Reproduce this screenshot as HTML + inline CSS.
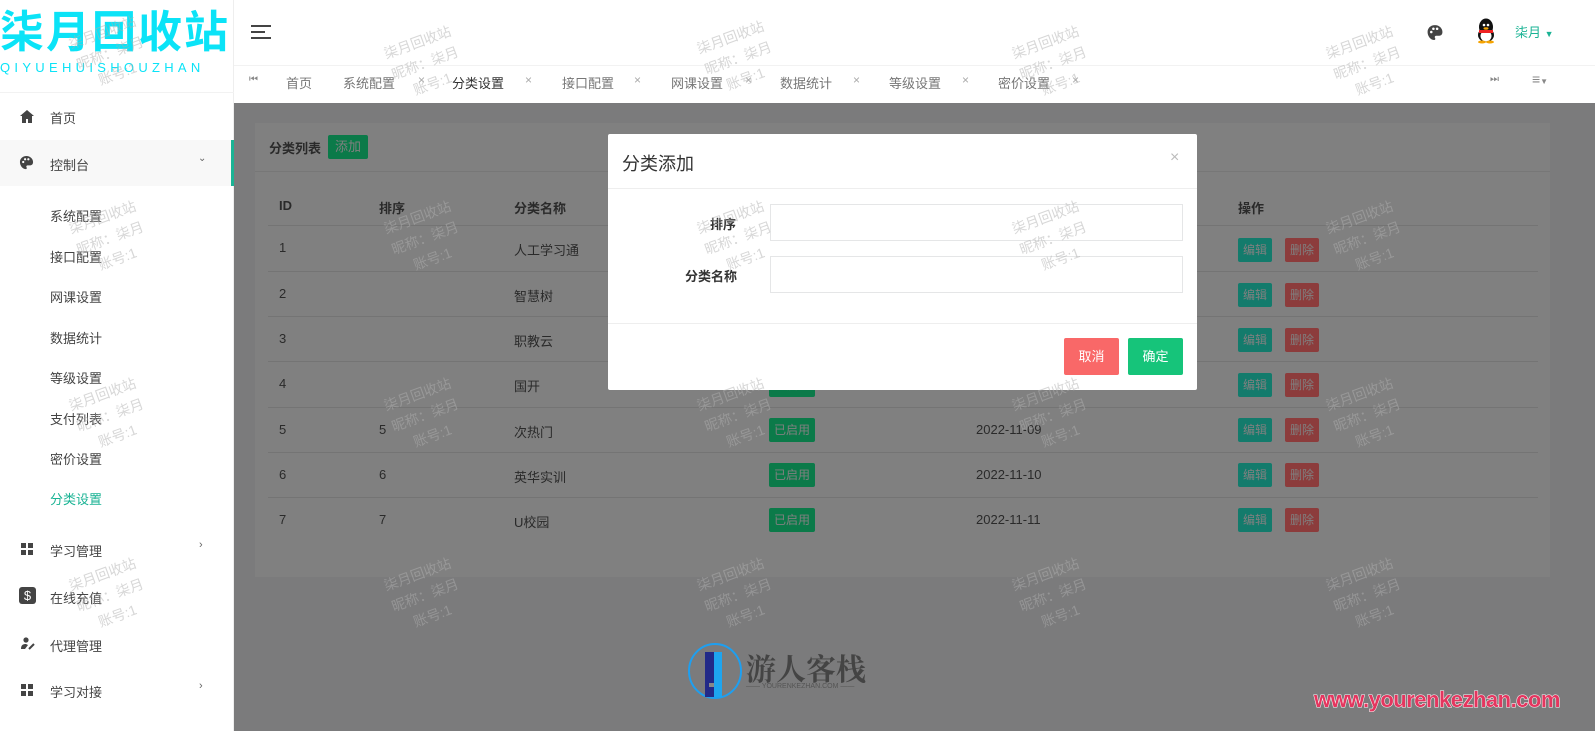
<!DOCTYPE html>
<html><head><meta charset="utf-8"><style>
*{margin:0;padding:0;box-sizing:border-box}
body{width:1595px;height:731px;overflow:hidden;position:relative;font-family:"Liberation Sans","Noto Sans CJK SC",sans-serif;font-size:13px;color:#333;background:#fff}
.a{position:absolute;white-space:nowrap}
.side{position:absolute;left:0;top:0;width:234px;height:731px;background:#fff;border-right:1px solid #eee}
.mi{position:absolute;left:50px;font-size:13px;color:#444}
.main{position:absolute;left:234px;top:103px;width:1361px;height:628px;background:#7b7b7c}
.card{position:absolute;left:21px;top:20px;width:1295px;height:454px;background:#808080}
.th{font-weight:bold;color:#2a2a2a}
.td{color:#2a2a2a}
.line{position:absolute;left:25px;width:1270px;height:1px;background:#747474}
.b{position:absolute;height:24px;line-height:24px;font-size:12px;padding:0 5px;border-radius:2px;color:#808080}
.bg{background-color:#0b7a49 !important}
.be{background-color:#137b6c !important}
.bd{background-color:#8c3c3c !important}
.wm{position:absolute;color:rgba(175,175,175,.5);font-size:14px;line-height:22px;text-align:center;transform:rotate(-20deg)}
.tab{position:absolute;top:73px;font-size:13px;color:#777}
.x{position:absolute;top:73px;color:#aaa;font-size:12px}
</style></head><body>
<div class="side">
 <div class="a" style="left:0;top:8px;font-size:44px;line-height:50px;color:#0be3f7;font-weight:bold;letter-spacing:2px">柒月回收站</div>
 <div class="a" style="left:0;top:60px;font-size:13px;color:#0be3f7;letter-spacing:4.3px">QIYUEHUISHOUZHAN</div>
 <div style="position:absolute;left:0;top:92px;width:234px;height:1px;background:#f2f2f2"></div>
 <svg class="a" style="left:20px;top:110px" width="14" height="13" viewBox="0 0 14 13"><path d="M7 0L0 6h2v7h4V9h2v4h4V6h2z" fill="#444"/></svg>
 <div class="mi" style="top:108px">首页</div>
 <div style="position:absolute;left:0;top:140px;width:234px;height:46px;background:#f8f8f8;border-right:3px solid #1ab394"></div>
 <svg class="a" style="left:19px;top:155px" width="15" height="15" viewBox="0 0 16 16"><path d="M8 1C3.6 1 1 4 1 7.5 1 11 3.5 15 7 15c1.5 0 1.5-1.2 1-2-.6-1 0-2 1.5-2H12c2 0 3-1.5 3-3.5C15 4 12 1 8 1z" fill="#444"/><circle cx="4.5" cy="7.5" r="1.2" fill="#fff"/><circle cx="6.5" cy="4.5" r="1.2" fill="#fff"/><circle cx="10" cy="4.5" r="1.2" fill="#fff"/></svg>
 <div class="mi" style="top:155px">控制台</div>
 <div class="a" style="left:198px;top:153px;font-size:10px;color:#666">⌄</div>
 <div class="mi" style="top:206px">系统配置</div>
 <div class="mi" style="top:247px">接口配置</div>
 <div class="mi" style="top:287px">网课设置</div>
 <div class="mi" style="top:328px">数据统计</div>
 <div class="mi" style="top:368px">等级设置</div>
 <div class="mi" style="top:409px">支付列表</div>
 <div class="mi" style="top:449px">密价设置</div>
 <div class="mi" style="top:489px;color:#1ab394">分类设置</div>
 <svg class="a" style="left:21px;top:543px" width="12" height="12"><rect x="0" y="0" width="5" height="5" fill="#444"/><rect x="7" y="0" width="5" height="5" fill="#444"/><rect x="0" y="7" width="5" height="5" fill="#444"/><rect x="7" y="7" width="5" height="5" fill="#444"/></svg>
 <div class="mi" style="top:541px">学习管理</div>
 <div class="a" style="left:199px;top:539px;font-size:11px;color:#666">›</div>
 <div class="a" style="left:19px;top:587px;width:17px;height:17px;border-radius:3px;background:#444;color:#fff;font-size:13px;text-align:center;line-height:17px">$</div>
 <div class="mi" style="top:588px">在线充值</div>
 <svg class="a" style="left:21px;top:637px" width="14" height="13"><circle cx="5" cy="3" r="2.6" fill="#444"/><path d="M0 12c0-4 2-5 5-5l2 1-3 4z" fill="#444"/><path d="M8 12l5-5" stroke="#444" stroke-width="2"/></svg>
 <div class="mi" style="top:636px">代理管理</div>
 <svg class="a" style="left:21px;top:684px" width="12" height="12"><rect x="0" y="0" width="5" height="5" fill="#444"/><rect x="7" y="0" width="5" height="5" fill="#444"/><rect x="0" y="7" width="5" height="5" fill="#444"/><rect x="7" y="7" width="5" height="5" fill="#444"/></svg>
 <div class="mi" style="top:682px">学习对接</div>
 <div class="a" style="left:199px;top:680px;font-size:11px;color:#666">›</div>
</div>
<svg class="a" style="left:251px;top:25px" width="20" height="14"><path d="M0 1h20M0 7h14M0 13h20" stroke="#444" stroke-width="2"/></svg>
<svg class="a" style="left:1426px;top:24px" width="18" height="17" viewBox="0 0 16 16"><path d="M8 1C3.6 1 1 4 1 7.5 1 11 3.5 15 7 15c1.5 0 1.5-1.2 1-2-.6-1 0-2 1.5-2H12c2 0 3-1.5 3-3.5C15 4 12 1 8 1z" fill="#444"/><circle cx="4.5" cy="7.5" r="1.2" fill="#fff"/><circle cx="6.5" cy="4.5" r="1.2" fill="#fff"/><circle cx="10" cy="4.5" r="1.2" fill="#fff"/></svg>
<svg class="a" style="left:1475px;top:18px" width="22" height="26" viewBox="0 0 22 26"><ellipse cx="11" cy="9" rx="7" ry="8.5" fill="#111"/><ellipse cx="11" cy="17" rx="8" ry="7" fill="#111"/><ellipse cx="11" cy="18" rx="5.5" ry="5.5" fill="#fff"/><rect x="4" y="12" width="14" height="3" fill="#e22"/><ellipse cx="7" cy="24" rx="4" ry="1.5" fill="#f5a300"/><ellipse cx="15" cy="24" rx="4" ry="1.5" fill="#f5a300"/><circle cx="9" cy="7" r="1.3" fill="#fff"/><circle cx="13" cy="7" r="1.3" fill="#fff"/><ellipse cx="11" cy="10.5" rx="2.5" ry="1.2" fill="#f5a300"/></svg>
<div class="a" style="left:1515px;top:22px;color:#1ab394;font-size:13px">柒月 <span style="font-size:9px">▼</span></div>
<div style="position:absolute;left:234px;top:65px;width:1361px;height:1px;background:#f2f2f2"></div>
<div class="a" style="left:249px;top:74px;font-size:10px;color:#888">⏮</div>
<div class="tab" style="left:286px">首页</div>
<div class="tab" style="left:343px">系统配置</div><div class="x" style="left:418px">×</div>
<div class="tab" style="left:452px;color:#333">分类设置</div><div class="x" style="left:525px">×</div>
<div class="tab" style="left:562px">接口配置</div><div class="x" style="left:634px">×</div>
<div class="tab" style="left:671px">网课设置</div><div class="x" style="left:745px">×</div>
<div class="tab" style="left:780px">数据统计</div><div class="x" style="left:853px">×</div>
<div class="tab" style="left:889px">等级设置</div><div class="x" style="left:962px">×</div>
<div class="tab" style="left:998px">密价设置</div><div class="x" style="left:1072px">×</div>
<div class="a" style="left:1490px;top:74px;font-size:10px;color:#888">⏭</div>
<div class="a" style="left:1532px;top:71px;font-size:14px;color:#888">≡<span style="font-size:8px">▼</span></div>
<div class="main">
 <div class="card">
  <div class="a th" style="left:14px;top:15px">分类列表</div>
  <div class="b bg" style="left:73px;top:12px;height:24px;font-size:13px;padding:0 7px">添加</div>
  <div class="line" style="left:0;width:1295px;top:48px;background:#777"></div>
  <div class="a th" style="left:24px;top:75px">ID</div>
  <div class="a th" style="left:124px;top:75px">排序</div>
  <div class="a th" style="left:259px;top:75px">分类名称</div>
  <div class="a th" style="left:983px;top:75px">操作</div>
  <div class="line" style="left:13px;top:102px"></div>
  <div class="line" style="left:13px;top:148px"></div>
  <div class="line" style="left:13px;top:193px"></div>
  <div class="line" style="left:13px;top:238px"></div>
  <div class="line" style="left:13px;top:284px"></div>
  <div class="line" style="left:13px;top:329px"></div>
  <div class="line" style="left:13px;top:374px"></div>
  <div class="a td" style="left:24px;top:117px">1</div><div class="a td" style="left:259px;top:117px">人工学习通</div>
  <div class="a td" style="left:24px;top:163px">2</div><div class="a td" style="left:259px;top:163px">智慧树</div>
  <div class="a td" style="left:24px;top:208px">3</div><div class="a td" style="left:259px;top:208px">职教云</div>
  <div class="a td" style="left:24px;top:253px">4</div><div class="a td" style="left:259px;top:253px">国开</div>
  <div class="a td" style="left:24px;top:299px">5</div><div class="a td" style="left:124px;top:299px">5</div><div class="a td" style="left:259px;top:299px">次热门</div><div class="b bg" style="left:514px;top:295px">已启用</div><div class="a td" style="left:721px;top:299px">2022-11-09</div>
  <div class="a td" style="left:24px;top:344px">6</div><div class="a td" style="left:124px;top:344px">6</div><div class="a td" style="left:259px;top:344px">英华实训</div><div class="b bg" style="left:514px;top:340px">已启用</div><div class="a td" style="left:721px;top:344px">2022-11-10</div>
  <div class="a td" style="left:24px;top:389px">7</div><div class="a td" style="left:124px;top:389px">7</div><div class="a td" style="left:259px;top:389px">U校园</div><div class="b bg" style="left:514px;top:385px">已启用</div><div class="a td" style="left:721px;top:389px">2022-11-11</div>
  <div class="b bg" style="left:514px;top:250px">已启用</div>
 </div>
 <div class="b be" style="left:1004px;top:135px">编辑</div><div class="b bd" style="left:1051px;top:135px">删除</div>
 <div class="b be" style="left:1004px;top:180px">编辑</div><div class="b bd" style="left:1051px;top:180px">删除</div>
 <div class="b be" style="left:1004px;top:225px">编辑</div><div class="b bd" style="left:1051px;top:225px">删除</div>
 <div class="b be" style="left:1004px;top:270px">编辑</div><div class="b bd" style="left:1051px;top:270px">删除</div>
 <div class="b be" style="left:1004px;top:315px">编辑</div><div class="b bd" style="left:1051px;top:315px">删除</div>
 <div class="b be" style="left:1004px;top:360px">编辑</div><div class="b bd" style="left:1051px;top:360px">删除</div>
 <div class="b be" style="left:1004px;top:405px">编辑</div><div class="b bd" style="left:1051px;top:405px">删除</div>
 <svg class="a" style="left:454px;top:540px" width="56" height="56"><ellipse cx="27" cy="28" rx="26" ry="27" fill="none" stroke="#1e9ff0" stroke-width="2"/><rect x="17" y="9" width="9" height="45" fill="#222a88"/><rect x="26" y="9" width="8" height="45" fill="#1ea5f0"/><rect x="21" y="40" width="5" height="4" fill="#888"/></svg>
 <div class="a" style="left:512px;top:542px;font-family:'Noto Serif CJK SC',serif;font-weight:bold;font-size:30px;color:#444">游人客栈</div>
 <div class="a" style="left:512px;top:580px;font-size:7px;color:#555">—— YOURENKEZHAN.COM ——</div>
 <div class="a" style="left:1080px;top:584px;font-size:22px;font-weight:bold;color:#e4365f;letter-spacing:-0.5px;-webkit-text-stroke:1px #fff;paint-order:stroke fill">www.yourenkezhan.com</div>
</div>
<div style="position:absolute;left:608px;top:134px;width:589px;height:256px;background:#fff;border-radius:2px">
 <div class="a" style="left:14px;top:16px;font-size:18px;color:#333">分类添加</div>
 <div class="a" style="left:562px;top:15px;font-size:16px;color:#bbb">×</div>
 <div style="position:absolute;left:0;top:54px;width:589px;height:1px;background:#eee"></div>
 <div class="a" style="left:102px;top:80px;font-weight:bold;color:#333">排序</div>
 <div style="position:absolute;left:162px;top:70px;width:413px;height:37px;border:1px solid #e5e6e7"></div>
 <div class="a" style="left:77px;top:132px;font-weight:bold;color:#333">分类名称</div>
 <div style="position:absolute;left:162px;top:122px;width:413px;height:37px;border:1px solid #e5e6e7"></div>
 <div style="position:absolute;left:0;top:189px;width:589px;height:1px;background:#eee"></div>
 <div class="a" style="left:456px;top:204px;width:55px;height:37px;background:#f96868;color:#fff;border-radius:2px;text-align:center;line-height:37px;font-size:13px">取消</div>
 <div class="a" style="left:520px;top:204px;width:55px;height:37px;background:#16c47a;color:#fff;border-radius:2px;text-align:center;line-height:37px;font-size:13px">确定</div>
</div>
<div class="wm" style="left:75px;top:20px">柒月回收站<br>昵称：柒月<br>账号:1</div>
<div class="wm" style="left:390px;top:30px">柒月回收站<br>昵称：柒月<br>账号:1</div>
<div class="wm" style="left:703px;top:25px">柒月回收站<br>昵称：柒月<br>账号:1</div>
<div class="wm" style="left:1018px;top:30px">柒月回收站<br>昵称：柒月<br>账号:1</div>
<div class="wm" style="left:1332px;top:30px">柒月回收站<br>昵称：柒月<br>账号:1</div>
<div class="wm" style="left:75px;top:205px">柒月回收站<br>昵称：柒月<br>账号:1</div>
<div class="wm" style="left:390px;top:205px">柒月回收站<br>昵称：柒月<br>账号:1</div>
<div class="wm" style="left:703px;top:205px">柒月回收站<br>昵称：柒月<br>账号:1</div>
<div class="wm" style="left:1018px;top:205px">柒月回收站<br>昵称：柒月<br>账号:1</div>
<div class="wm" style="left:1332px;top:205px">柒月回收站<br>昵称：柒月<br>账号:1</div>
<div class="wm" style="left:75px;top:382px">柒月回收站<br>昵称：柒月<br>账号:1</div>
<div class="wm" style="left:390px;top:382px">柒月回收站<br>昵称：柒月<br>账号:1</div>
<div class="wm" style="left:703px;top:382px">柒月回收站<br>昵称：柒月<br>账号:1</div>
<div class="wm" style="left:1018px;top:382px">柒月回收站<br>昵称：柒月<br>账号:1</div>
<div class="wm" style="left:1332px;top:382px">柒月回收站<br>昵称：柒月<br>账号:1</div>
<div class="wm" style="left:75px;top:562px">柒月回收站<br>昵称：柒月<br>账号:1</div>
<div class="wm" style="left:390px;top:562px">柒月回收站<br>昵称：柒月<br>账号:1</div>
<div class="wm" style="left:703px;top:562px">柒月回收站<br>昵称：柒月<br>账号:1</div>
<div class="wm" style="left:1018px;top:562px">柒月回收站<br>昵称：柒月<br>账号:1</div>
<div class="wm" style="left:1332px;top:562px">柒月回收站<br>昵称：柒月<br>账号:1</div>
</body></html>
